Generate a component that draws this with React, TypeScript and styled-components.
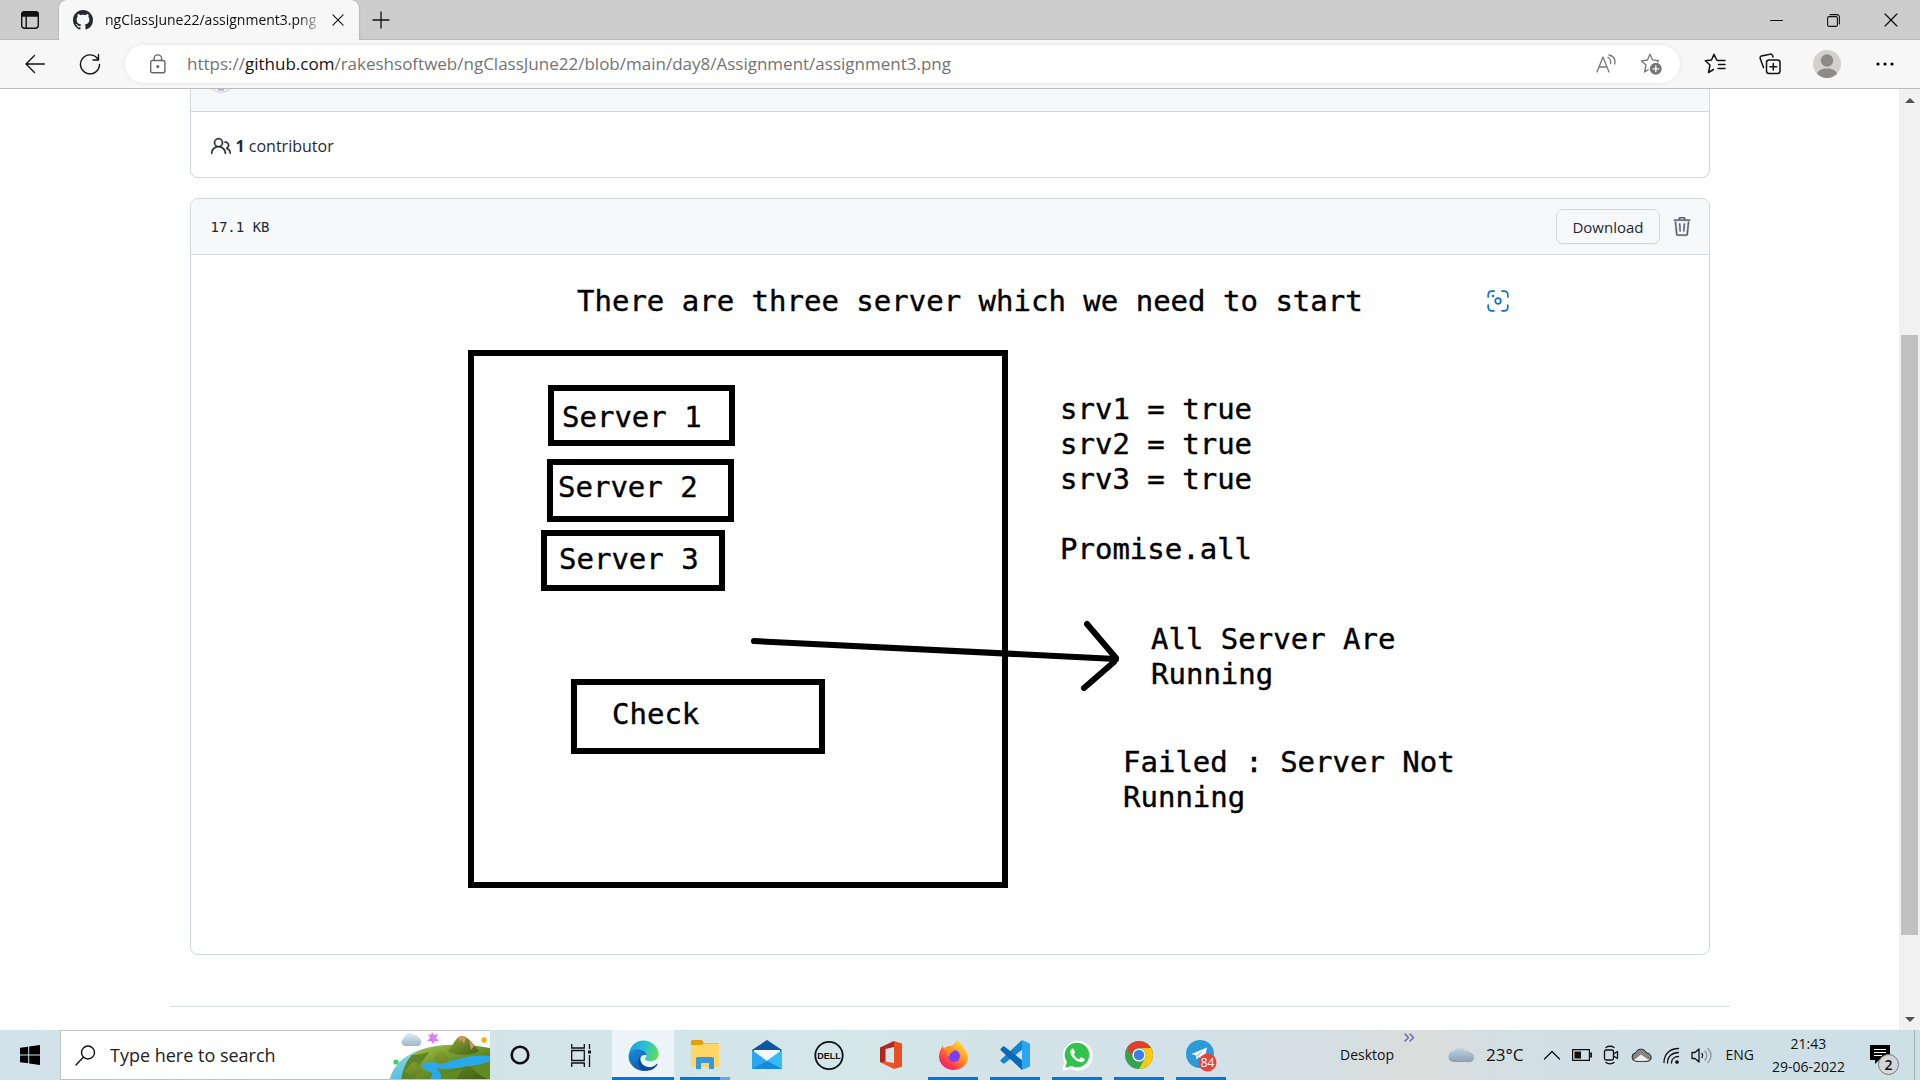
import React from "react";
import styled, { createGlobalStyle, css } from "styled-components";
import { GoPeople, GoTrash } from "react-icons/go";

const ui = `"Open Sans", "Noto Sans", sans-serif`;
const mono = `"DejaVu Sans Mono", "Liberation Mono", monospace`;

const GlobalStyle = createGlobalStyle`
  *, *::before, *::after { box-sizing: border-box; }
  body { margin: 0; background: #fff; font-family: ${ui}; color: #24292f; overflow: hidden; }
  button { border: 0; padding: 0; background: none; color: inherit; font: inherit; }
  svg { display: block; flex: none; }
`;

const Screen = styled.div`
  display: flex;
  flex-direction: column;
  height: 100vh;
`;

/* ---------- browser chrome ---------- */

const TitleBar = styled.header`
  display: flex;
  flex: none;
  height: 40px;
  background: #cdcdcd;
  box-shadow: inset 0 -1px #b9b9b9;
`;

const ChromeButton = styled.button<{ $w: number; $c?: string }>`
  display: flex;
  flex: none;
  align-items: center;
  justify-content: center;
  width: ${(p) => p.$w}px;
  height: 100%;
  color: ${(p) => p.$c ?? "#111"};
`;

const Tab = styled.div`
  display: flex;
  align-items: center;
  width: 300px;
  padding: 0 8px 0 14px;
  border-radius: 8px 8px 0 0;
  background: #f7f7f7;
  box-shadow: 0 0 2px rgba(0, 0, 0, 0.3);
  clip-path: inset(0 -3px 0 -3px);
`;

const TabTitle = styled.span`
  flex: 1;
  margin-left: 12px;
  overflow: hidden;
  white-space: nowrap;
  font-size: 14px;
  line-height: 24px;
  color: #111;
  mask-image: linear-gradient(90deg, #000 88%, transparent 100%);
`;

const WindowControls = styled.div`
  display: flex;
  margin-left: auto;
`;

const Toolbar = styled.nav`
  display: flex;
  flex: none;
  align-items: center;
  height: 49px;
  padding: 0 7px;
  border-bottom: 1px solid #bbb;
  background: #f7f7f7;
`;

const AddressBar = styled.div`
  display: flex;
  flex: 1;
  align-items: center;
  height: 38px;
  margin: 0 8px;
  padding: 0 6px 0 10px;
  border-radius: 19px;
  background: #fff;
  box-shadow: 0 0 4px rgba(0, 0, 0, 0.09);
`;

const Url = styled.a`
  flex: 1;
  margin-left: 6px;
  overflow: hidden;
  white-space: nowrap;
  font-size: 17px;
  line-height: 28px;
  color: #737373;
  text-decoration: none;
`;

const Host = styled.span`
  color: #111;
`;

/* ---------- page ---------- */

const Viewport = styled.div`
  display: flex;
  flex: 1;
  min-height: 0;
  overflow: hidden;
`;

const Page = styled.main`
  flex: 1;
  min-width: 0;
  overflow: hidden;
`;

const Container = styled.div`
  max-width: 1600px;
  margin: 0 auto;
  padding: 0 40px;
`;

const panel = css`
  border: 1px solid #d0d7de;
  background: #fff;
`;

const CommitBox = styled.section`
  ${panel}
  border-top: 0;
  border-radius: 0 0 8px 8px;
`;

const CommitHeader = styled.div`
  display: flex;
  align-items: flex-end;
  height: 23px;
  padding: 0 15px 18px;
  border-bottom: 1px solid #d0d7de;
  background: #f6f8fa;
  overflow: hidden;
`;

const Contributors = styled.div`
  display: flex;
  align-items: center;
  gap: 5px;
  height: 65px;
  padding: 2px 20px 0;
  font-size: 16px;
  line-height: 24px;
`;

const FileBox = styled.section`
  ${panel}
  margin-top: 20px;
  border-radius: 8px;
`;

const FileHeader = styled.div`
  display: flex;
  align-items: center;
  height: 56px;
  padding: 0 17px 0 20px;
  border-bottom: 1px solid #d0d7de;
  border-radius: 8px 8px 0 0;
  background: #f6f8fa;
`;

const FileSize = styled.span`
  margin-right: auto;
  font-family: ${mono};
  font-size: 14px;
  line-height: 20px;
`;

const DownloadButton = styled.button`
  height: 35px;
  margin-right: 12px;
  padding: 0 15px;
  border: 1px solid #d5d8db;
  border-radius: 7px;
  background: #f6f8fa;
  box-shadow: 0 1px 0 rgba(27, 31, 36, 0.04);
  font-size: 15px;
  font-weight: 500;
  line-height: 20px;
`;

const IconButton = styled.button`
  color: #57606a;
  stroke-width: 0.4px;
`;

const ImageArea = styled.div`
  position: relative;
  display: flex;
  justify-content: center;
`;

const Diagram = styled.svg`
  width: 1120px;
  max-width: 100%;
  height: auto;
  font-family: ${mono};
  font-size: 29px;
  fill: #000;
`;

const VisualSearch = styled.button`
  position: absolute;
  top: 35px;
  left: calc(50% + 537px);
  color: #0b70c9;
`;

const FooterRule = styled.hr`
  height: 1px;
  margin: 51px -20px 0;
  border: 0;
  background: #d8dee4;
`;

const Scrollbar = styled.div`
  display: flex;
  flex: none;
  flex-direction: column;
  align-items: center;
  width: 21px;
  background: #f1f1f1;
`;

const ScrollArrow = styled.button`
  display: flex;
  flex: none;
  align-items: center;
  justify-content: center;
  width: 21px;
  height: 22px;
`;

const ScrollTrack = styled.div`
  flex: 1;
  width: 17px;
  padding-top: 224px;
`;

const ScrollThumb = styled.div`
  height: 600px;
  background: #c1c1c1;
`;

/* ---------- taskbar ---------- */

const Taskbar = styled.footer`
  display: flex;
  flex: none;
  height: 50px;
  background: linear-gradient(90deg, #d2e2ea 0, #d3e6e8 45%, #d3e0e8 64%, #d4dfe3 69%, #dadddb 74%, #d2dfe5 79%, #cfdfe6 90%, #cde0e6 100%);
  color: #111;
`;

const TaskSlot = styled.button<{ $w?: number; $active?: boolean }>`
  position: relative;
  display: flex;
  flex: none;
  align-items: center;
  justify-content: center;
  width: ${(p) => p.$w ?? 62}px;
  height: 50px;
  background: ${(p) => (p.$active ? "#edf4f7" : "transparent")};
`;

const RunningLine = styled.span<{ $inset: number; $split?: boolean }>`
  position: absolute;
  right: ${(p) => p.$inset}px;
  bottom: 0;
  left: ${(p) => p.$inset}px;
  height: 3px;
  background: ${(p) => (p.$split ? "linear-gradient(90deg, #0078d7 80%, #62aae4 80%)" : "#0078d7")};
`;

const SearchBox = styled.label`
  display: flex;
  flex: none;
  align-items: center;
  width: 430px;
  height: 50px;
  padding-left: 14px;
  border: 1px solid #bfc3c5;
  border-right: 0;
  background: #fff;
`;

const SearchInput = styled.input`
  flex: 1;
  min-width: 0;
  height: 40px;
  margin-left: 14px;
  padding: 0;
  border: 0;
  outline: 0;
  background: none;
  font-family: ${ui};
  font-size: 18px;
  color: #222;
  &::placeholder { color: #222; opacity: 1; }
`;

const Tray = styled.div`
  display: flex;
  align-items: center;
  margin-left: auto;
`;

const DesktopLabel = styled.span`
  font-size: 14px;
  line-height: 20px;
`;

const Overflow = styled.button`
  align-self: flex-start;
  margin: 3px 32px 0 10px;
`;

const Weather = styled.button`
  display: flex;
  align-items: center;
  gap: 11px;
  margin-right: 20px;
  font-size: 17px;
  line-height: 24px;
`;

const TrayIcons = styled.div`
  display: flex;
  align-items: center;
  gap: 11px;
  margin-right: 13px;
`;

const Language = styled.button`
  font-size: 14px;
  line-height: 20px;
`;

const Clock = styled.time`
  display: flex;
  flex-direction: column;
  gap: 2px;
  margin: 0 23px 0 18px;
  text-align: center;
  font-size: 14px;
  line-height: 21px;
`;

const Notifications = styled.button`
  position: relative;
  display: flex;
  align-items: flex-start;
  width: 46px;
  height: 50px;
  padding: 15px 0 0 2px;
`;

const NoticeCount = styled.span`
  position: absolute;
  top: 24px;
  left: 10px;
  width: 21px;
  height: 21px;
  border: 1px solid #777;
  border-radius: 50%;
  background: #d3d6d8;
  font-size: 14px;
  font-weight: 600;
  line-height: 19px;
  text-align: center;
`;

const ShowDesktop = styled.button`
  width: 6px;
  height: 50px;
  border-left: 1px solid #9fb0b8;
`;

/* ---------- line icons ---------- */

type LineProps = { w: number; h?: number; box: string; sw?: number; children: React.ReactNode };
const Line = ({ w, h, box, sw = 1.4, children }: LineProps) => (
  <svg width={w} height={h ?? w} viewBox={box} fill="none" stroke="currentColor" strokeWidth={sw} strokeLinecap="round" strokeLinejoin="round" aria-hidden="true">
    {children}
  </svg>
);

const GitHubIcon = () => (
  <svg width="20" height="20" viewBox="0 0 16 16" fill="#24292f" aria-hidden="true">
    <path fillRule="evenodd" d="M8 0C3.58 0 0 3.58 0 8c0 3.54 2.29 6.53 5.47 7.59.4.07.55-.17.55-.38 0-.19-.01-.82-.01-1.49-2.01.37-2.53-.49-2.69-.94-.09-.23-.48-.94-.82-1.13-.28-.15-.68-.52-.01-.53.63-.01 1.08.58 1.23.82.72 1.21 1.87.87 2.33.66.07-.52.28-.87.51-1.07-1.78-.2-3.64-.89-3.64-3.95 0-.87.31-1.59.82-2.15-.08-.2-.36-1.02.08-2.12 0 0 .67-.21 2.2.82.64-.18 1.32-.27 2-.27.68 0 1.36.09 2 .27 1.53-1.04 2.2-.82 2.2-.82.44 1.1.16 1.92.08 2.12.51.56.82 1.27.82 2.15 0 3.07-1.87 3.75-3.65 3.95.29.25.54.73.54 1.48 0 1.07-.01 1.93-.01 2.2 0 .21.15.46.55.38A8.013 8.013 0 0016 8c0-4.42-3.58-8-8-8z" />
  </svg>
);

const TabActionsIcon = () => (
  <Line w={20} box="0 0 20 20" sw={1.4}>
    <rect x="1.7" y="1.7" width="16.6" height="16.6" rx="3" />
    <path d="M1.7 6V4.5a2.8 2.8 0 0 1 2.8-2.8h11a2.8 2.8 0 0 1 2.8 2.8V6z" fill="currentColor" />
    <path d="M6.2 6v12" />
  </Line>
);

const CloseIcon = ({ s = 13 }: { s?: number }) => (
  <Line w={s} box="0 0 13 13" sw={1.2}><path d="M1 1l11 11M12 1L1 12" /></Line>
);

const LockIcon = () => (
  <Line w={18} h={20} box="0 0 18 20" sw={1.4}>
    <rect x="1.7" y="6.5" width="14.2" height="12.3" rx="1.8" />
    <path d="M5 6.5V4.7a3.8 3.8 0 0 1 7.6 0v1.8" />
    <circle cx="8.8" cy="12.6" r="0.9" fill="currentColor" />
  </Line>
);

const star = "M10 1.3l2.5 5.6 6.1.7";

const Cloud = ({ w = 28 }: { w?: number }) => (
  <svg width={w} height={w / 2} viewBox="0 0 28 14" aria-hidden="true">
    <defs>
      <linearGradient id="cloudFill" x1="0" y1="0" x2="0" y2="1">
        <stop offset="0" stopColor="#bfd3e2" /><stop offset="1" stopColor="#8aa0b1" />
      </linearGradient>
    </defs>
    <path d="M6 14a5.6 5.6 0 0 1 .8-11.1A7 7 0 0 1 13 0c2.6 0 4.5 1.2 5.6 2.9a5 5 0 0 1 4.6 1.5A4.9 4.9 0 0 1 23 14z" fill="url(#cloudFill)" />
  </svg>
);

/* ---------- taskbar pictures ---------- */

const SearchScene = () => (
  <svg width="100" height="48" viewBox="0 0 100 48" aria-hidden="true">
    <defs>
      <linearGradient id="land" x1="0" y1="0" x2="1" y2="1"><stop offset="0" stopColor="#b5c748" /><stop offset="0.5" stopColor="#6c962a" /><stop offset="1" stopColor="#3b5c14" /></linearGradient>
      <linearGradient id="hill" x1="0" y1="0" x2="1" y2="1"><stop offset="0" stopColor="#95ad37" /><stop offset="1" stopColor="#3f5f14" /></linearGradient>
      <linearGradient id="sea" x1="0" y1="0" x2="1" y2="1"><stop offset="0" stopColor="#9fe0dc" /><stop offset="1" stopColor="#1fa3ea" /></linearGradient>
      <linearGradient id="puff" x1="0" y1="0" x2="0" y2="1"><stop offset="0" stopColor="#dfe9f1" /><stop offset="1" stopColor="#9fb8ca" /></linearGradient>
    </defs>
    <path d="M0 48C4 30 24 15 58 14c18-1 32 2 42 6v28z" fill="url(#sea)" />
    <path d="M22 24C36 13 72 11 100 17v31H12c2-8 6-17 10-24z" fill="url(#land)" />
    <path d="M22 24c6 0 10-1 17-3-4 6-9 12-11 17-1 4-2 7-3 10H11c2-9 5-18 11-24z" fill="#5c8624" />
    <path d="M100 25c-16-2-26 2-40 5-12 2-26 0-28 4s10 6 10 9c0 2-1 4-2 5h12c0-5-4-8-5-11 16 3 30-3 53-4z" fill="#2aa9ea" />
    <path d="M50 48c2-8 24-8 50-18v18z" fill="#5f8a24" />
    <path d="M57 20c6-4 8-14 14-15 8-1 14 12 18 15-8 5-24 5-32 0z" fill="url(#hill)" />
    <path d="M68 7l3-2 5 2-2 6-3-5-1 3zM79 9l5 6-3 4z" fill="#dd8f66" />
    <path d="M42 29c3-2 4-10 9-9s7 7 9 9c-4 5-14 5-18 0zM15 40c3-2 5-9 9-9s7 6 9 9c-4 5-14 5-18 0zM66 48c4-4 6-13 11-13s9 8 20 13z" fill="url(#hill)" />
    <path d="M14 15a4.500 4.500 0 0 1 0-8 6 6 0 0 1 10-3 5 5 0 0 1 5 3 4.500 4.500 0 0 1 0 8z" fill="url(#puff)" />
    <path d="M42 1l2 3 4-1-2 4 3 3-4 0-2 3-2-3-4 0 3-3-2-4 3 1z" fill="#df7df5" />
    <circle cx="94" cy="9" r="2.7" fill="#ffb000" /><circle cx="6" cy="31" r="2.6" fill="#3fd06a" />
  </svg>
);

const EdgeIcon = () => (
  <svg width="31" height="31" viewBox="0 0 32 32" aria-hidden="true">
    <defs>
      <linearGradient id="edgeTop" x1="0" y1="0.3" x2="1" y2="0.5"><stop offset="0" stopColor="#1b9de2" /><stop offset="0.55" stopColor="#2bc3d2" /><stop offset="1" stopColor="#62dc52" /></linearGradient>
      <linearGradient id="edgeMid" x1="0" y1="0" x2="0.6" y2="1"><stop offset="0" stopColor="#1b8fdc" /><stop offset="1" stopColor="#0d59b4" /></linearGradient>
    </defs>
    <path d="M1 15C2 6 8 .5 16 .5S31.5 7 31.5 14c0 5-3.5 8-8 8-4 0-6-1.5-6-2.6 0-.9 1.7-1.4 1.7-4 0-3-3-5.4-7-5.4C7 10 2.5 12 1 15z" fill="url(#edgeTop)" />
    <path d="M.6 16C1 11.5 6 9 11.5 9.600c4.500.4 7.700 3 7.700 6.200-3.700-1.500-7 1-7 5 0 6 5 10.700 10 9.700-2 1-4 1.400-6.200 1.400C7 31.900 0 24 .6 16z" fill="url(#edgeMid)" />
    <path d="M13 16.600c-1.500 6.500 3 11.400 9 11.400 3 0 6-1.200 7.500-3.300.6-.7 1.200.2.800.9-2 3.500-6 6-10.500 6.200C11 32 8 22 13 16.600z" fill="#0b4a9c" />
  </svg>
);

const FolderIcon = () => (
  <svg width="28" height="30" viewBox="0 0 28 30" aria-hidden="true">
    <path d="M0 1.500A1.500 1.500 0 0 1 1.500 0H11l2 3h13.500A1.500 1.500 0 0 1 28 4.500V23H0z" fill="#e0a010" />
    <path d="M0 5h11l2-1.500h15V27H0z" fill="#ffd767" />
    <path d="M5 29V18.500A1.500 1.500 0 0 1 6.500 17h15a1.500 1.500 0 0 1 1.500 1.500V29h-5v-6h-8v6z" fill="#3a96dd" />
  </svg>
);

const MailIcon = () => (
  <svg width="30" height="32" viewBox="0 0 30 32" aria-hidden="true">
    <path d="M0 11L15 1l15 10v4H0z" fill="#0a57a6" />
    <path d="M2 11h26v7L15 23 2 17z" fill="#f5f8fb" />
    <path d="M0 11l15 11L30 11v19H0z" fill="#2aa7ee" /><path d="M15 22L30 11v19z" fill="#36bbf7" /><path d="M0 30l15-8 15 8z" fill="#148adb" />
  </svg>
);

const DellIcon = () => (
  <svg width="30" height="31" viewBox="0 0 30 31" aria-hidden="true">
    <circle cx="15" cy="15.5" r="13.7" fill="none" stroke="#111" strokeWidth="1.8" />
    <text x="15" y="19" textAnchor="middle" fontFamily="Liberation Sans, Arial, sans-serif" fontWeight="700" fontSize="9" fill="#111">DELL</text>
  </svg>
);

const OfficeIcon = () => (
  <svg width="23" height="28" viewBox="0 0 23 28" aria-hidden="true">
    <path d="M14 0l8 2.500v23L14 28z" fill="#e8501f" />
    <path d="M0 6.500L14 0v6L5.500 8v12.500L1.500 22 0 21z" fill="#b3261e" />
    <path d="M1.500 22l4-1.500L14 22v6z" fill="#f0522a" />
  </svg>
);

const FirefoxIcon = () => (
  <svg width="29" height="30" viewBox="0 0 29 30" aria-hidden="true">
    <defs>
      <linearGradient id="fox" x1="0.9" y1="0" x2="0.1" y2="1"><stop offset="0" stopColor="#fff14a" /><stop offset="0.4" stopColor="#ff9a1f" /><stop offset="0.75" stopColor="#ff3a4c" /><stop offset="1" stopColor="#e31587" /></linearGradient>
    </defs>
    <path d="M18 0c3 3 6 5 6.500 8 1.500 1 4.300 4 4.300 9.500C28.800 25 22 30 14.500 30S0 24.500 0 16.500C0 12 2 8 4 5.500c0 1.500.4 2.500 1 3.200C7 6.500 9.500 5.800 12 6c2-.2 4.500-3 6-6z" fill="url(#fox)" />
    <circle cx="15" cy="16" r="6" fill="#7a3ff0" />
    <path d="M5 9c3-1.500 6-1 7.500.8 1.500-.2 3 .3 3.500 1-2 .3-3 1.500-4 2-1.500.8-2 2-1 4-3-1-4-4-3-6z" fill="#ff9420" />
  </svg>
);

const CodeIcon = () => (
  <svg width="30" height="30" viewBox="0 0 30 30" aria-hidden="true">
    <path d="M22 0L1 19.500c-.8.700-.8 1.500 0 2.200l1.800 1.600c.6.500 1.200.5 1.900 0L23 9z" fill="#1583cd" />
    <path d="M22 30L1 10.500c-.8-.7-.8-1.500 0-2.200l1.800-1.600c.6-.5 1.200-.5 1.900 0L23 21z" fill="#0b6ab5" />
    <path d="M22 0l8 3.500v23L22 30z" fill="#2ba6f0" />
  </svg>
);

const WhatsAppIcon = () => (
  <svg width="31" height="31" viewBox="0 0 31 31" aria-hidden="true">
    <path d="M.5 30.500l2-8A15 15 0 1 1 9 29z" fill="#fff" />
    <path d="M3.300 27.700l1.600-5.700A12.300 12.300 0 1 1 9.600 26z" fill="#33c24d" />
    <path d="M11 8.500c-.8-.3-2.800 1-2.700 3.500.2 4.500 6.500 10.300 11 10.300 2 0 3.700-1.700 3.500-3 0-.6-3.400-2.200-3.900-2-.6.200-1.300 2-2 1.900-2-.6-4.500-3-5-4.700 0-.6 1.300-1.300 1.200-2 0-.5-1.500-3.900-2.100-4z" fill="#fff" />
  </svg>
);

const ChromeIcon = () => (
  <svg width="28" height="28" viewBox="0 0 28 28" aria-hidden="true">
    <circle cx="14" cy="14" r="14" fill="#34a350" />
    <path d="M1.900 7A14 14 0 0 1 26.100 7H14a7 7 0 0 0-6 10.500z" fill="#e63b2e" />
    <path d="M26.100 7A14 14 0 0 1 14 28l6-10.500A7 7 0 0 0 14 7z" fill="#fdc913" />
    <circle cx="14" cy="14" r="6.600" fill="#fff" /><circle cx="14" cy="14" r="5.200" fill="#3b7eea" />
  </svg>
);

const TelegramIcon = () => (
  <svg width="31" height="33" viewBox="0 0 31 33" aria-hidden="true">
    <circle cx="14" cy="15" r="14" fill="#2a9bd6" />
    <path d="M5.500 15L21 8.500l-3 13-5-3.500-2.500 2.500-.5-4z" fill="#fff" /><path d="M10 16.500L18 11l-6 7z" fill="#a8cfe6" />
    <circle cx="21.5" cy="23.5" r="9" fill="#ee3f3d" />
    <text x="21.5" y="28" textAnchor="middle" fontFamily="Open Sans, sans-serif" fontSize="12" fill="#fff">84</text>
  </svg>
);

const taskApps = [
  { name: "Microsoft Edge", icon: <EdgeIcon />, running: true, active: true },
  { name: "File Explorer", icon: <FolderIcon />, running: true, split: true },
  { name: "Mail", icon: <MailIcon /> },
  { name: "Dell", icon: <DellIcon /> },
  { name: "Office", icon: <OfficeIcon /> },
  { name: "Firefox", icon: <FirefoxIcon />, running: true },
  { name: "Visual Studio Code", icon: <CodeIcon />, running: true },
  { name: "WhatsApp", icon: <WhatsAppIcon />, running: true },
  { name: "Chrome", icon: <ChromeIcon />, running: true },
  { name: "Telegram", icon: <TelegramIcon />, running: true },
];

const serverBoxes = [
  { x: 161, y: 133, w: 181, h: 55, label: "Server 1", tx: 172, ty: 172 },
  { x: 160, y: 207, w: 181, h: 57, label: "Server 2", tx: 168, ty: 242 },
  { x: 154, y: 278, w: 178, h: 55, label: "Server 3", tx: 169, ty: 314 },
  { x: 184, y: 427, w: 248, h: 69, label: "Check", tx: 222, ty: 469 },
];

const notes = [
  { x: 187, y: 56, text: "There are three server which we need to start" },
  { x: 670, y: 164, text: "srv1 = true" },
  { x: 670, y: 199, text: "srv2 = true" },
  { x: 670, y: 234, text: "srv3 = true" },
  { x: 670, y: 304, text: "Promise.all" },
  { x: 761, y: 394, text: "All Server Are" },
  { x: 761, y: 429, text: "Running" },
  { x: 733, y: 517, text: "Failed : Server Not" },
  { x: 733, y: 552, text: "Running" },
];

const AssignmentDiagram = () => (
  <Diagram viewBox="0 0 1120 699" role="img" aria-label="Assignment diagram">
    <g fill="none" stroke="#000" strokeWidth="6">
      <rect x="81" y="98" width="534" height="532" />
      {serverBoxes.map((b) => <rect key={b.label} x={b.x} y={b.y} width={b.w} height={b.h} />)}
      <path d="M364 386L726 404M697 369l29 34M694 433l30-26" strokeLinecap="round" strokeLinejoin="round" />
    </g>
    <g stroke="#000" strokeWidth="0.4">
      {serverBoxes.map((b) => <text key={b.label} x={b.tx} y={b.ty}>{b.label}</text>)}
      {notes.map((n) => <text key={n.y} x={n.x} y={n.y}>{n.text}</text>)}
    </g>
  </Diagram>
);

export default function App() {
  return (
    <Screen>
      <GlobalStyle />
      <TitleBar>
        <ChromeButton $w={59} aria-label="Tab actions"><TabActionsIcon /></ChromeButton>
        <Tab>
          <GitHubIcon />
          <TabTitle>ngClassJune22/assignment3.png</TabTitle>
          <ChromeButton $w={26} aria-label="Close tab"><CloseIcon s={12} /></ChromeButton>
        </Tab>
        <ChromeButton $w={43} aria-label="New tab">
          <Line w={18} box="0 0 18 18" sw={1.3}><path d="M9 1v16M1 9h16" /></Line>
        </ChromeButton>
        <WindowControls>
          <ChromeButton $w={57} aria-label="Minimize"><Line w={13} box="0 0 13 13" sw={1}><path d="M.5 6.500h12" /></Line></ChromeButton>
          <ChromeButton $w={57} aria-label="Restore">
            <Line w={13} box="0 0 13 13" sw={1.1}><rect x=".6" y="2.6" width="9.8" height="9.8" rx="1.5" /><path d="M3 .6h7a2.400 2.400 0 0 1 2.400 2.400v7" /></Line>
          </ChromeButton>
          <ChromeButton $w={58} aria-label="Close"><CloseIcon s={14} /></ChromeButton>
        </WindowControls>
      </TitleBar>

      <Toolbar>
        <ChromeButton $w={55} aria-label="Back"><Line w={20} box="0 0 20 20"><path d="M19.300 10H1M9.500 1.500L1 10l8.500 8.500" /></Line></ChromeButton>
        <ChromeButton $w={55} aria-label="Refresh"><Line w={22} box="0 0 22 22"><path d="M20.500 11.500A9.500 9.500 0 1 1 18.500 5.500M19.500 1.500v5.500h-5.500" /></Line></ChromeButton>
        <AddressBar>
          <ChromeButton $w={46} $c="#666" aria-label="Site information"><LockIcon /></ChromeButton>
          <Url href="#">https://<Host>github.com</Host>/rakeshsoftweb/ngClassJune22/blob/main/day8/Assignment/assignment3.png</Url>
          <ChromeButton $w={44} $c="#767676" aria-label="Read aloud">
            <Line w={20} box="0 0 20 20" sw={1.3}><path d="M1 18L7 3l6 15M3 13h8M12 3.500c2.500 1 3 4 2.500 6M13 1c5 1 6.500 5 5.800 9" /></Line>
          </ChromeButton>
          <ChromeButton $w={46} $c="#767676" aria-label="Add to favorites">
            <Line w={22} box="0 0 22 22" sw={1.3}>
              <path d={`${star}M10 1.300L7.500 7l-6.200.8L6 12 4.500 19l3.700-2.300M18.600 7.600l-1.300 1.300`} />
              <circle cx="15.8" cy="15.8" r="5.3" fill="currentColor" /><path d="M15.800 13v5.600M13 15.800h5.600" stroke="#fff" />
            </Line>
          </ChromeButton>
        </AddressBar>
        <ChromeButton $w={54} aria-label="Favorites">
          <Line w={22} box="0 0 22 22" sw={1.5}><path d="M12.800 7.300L10 1.300 7.500 7l-6.200.8L6 12 4.500 19.500l5-3M13.500 7.500h7.500M14.500 11.500h6.500M14 15.500h7" /></Line>
        </ChromeButton>
        <ChromeButton $w={56} aria-label="Collections">
          <Line w={22} box="0 0 22 22" sw={1.5}><rect x="7.5" y="7" width="13.5" height="13.5" rx="2.5" /><path d="M14.300 10.500v6.600M11 13.800h6.600M4.500 14.500L1.200 5.500a2 2 0 0 1 1.300-2.600L11 1.200a2 2 0 0 1 2.500 1.400l.5 1.400" /></Line>
        </ChromeButton>
        <ChromeButton $w={58} aria-label="Profile">
          <svg width="28" height="28" viewBox="0 0 28 28" aria-hidden="true">
            <circle cx="14" cy="14" r="14" fill="#d3d1ce" /><circle cx="14" cy="10.5" r="6.2" fill="#8e8a87" />
            <path d="M4 23.800c2-7 18-7 20 0a14 14 0 0 1-20 0z" fill="#8e8a87" />
          </svg>
        </ChromeButton>
        <ChromeButton $w={57} aria-label="Settings and more">
          <svg width="18" height="4" viewBox="0 0 18 4" aria-hidden="true"><circle cx="2" cy="2" r="1.6" /><circle cx="9" cy="2" r="1.6" /><circle cx="16" cy="2" r="1.6" /></svg>
        </ChromeButton>
      </Toolbar>

      <Viewport>
        <Page>
          <Container>
            <CommitBox>
              <CommitHeader>
                <svg width="30" height="30" viewBox="0 0 30 30" aria-hidden="true"><circle cx="15" cy="15" r="14.5" fill="#f0f0f2" stroke="#cfd1d8" /><path d="M12 26h6v1.500h-6z" fill="#c9a0e0" /></svg>
              </CommitHeader>
              <Contributors><GoPeople size={20} strokeWidth={0.5} /><span><strong>1</strong> contributor</span></Contributors>
            </CommitBox>
            <FileBox>
              <FileHeader>
                <FileSize>17.1 KB</FileSize>
                <DownloadButton>Download</DownloadButton>
                <IconButton aria-label="Delete this file"><GoTrash size={20} strokeWidth={0.5} /></IconButton>
              </FileHeader>
              <ImageArea>
                <AssignmentDiagram />
                <VisualSearch aria-label="Visual search">
                  <Line w={22} box="0 0 22 22" sw={1.7}>
                    <path d="M1.200 7V4.500A3.300 3.300 0 0 1 4.500 1.200H7M15 1.200h2.500a3.300 3.300 0 0 1 3.300 3.300V7M20.800 15v2.500a3.300 3.300 0 0 1-3.300 3.300H15M7 20.800H4.500a3.300 3.300 0 0 1-3.300-3.300V15" />
                    <circle cx="11" cy="11" r="2.8" /><circle cx="6" cy="6" r=".5" />
                  </Line>
                </VisualSearch>
              </ImageArea>
            </FileBox>
            <FooterRule />
          </Container>
        </Page>
        <Scrollbar>
          <ScrollArrow aria-label="Scroll up"><svg width="10" height="5" viewBox="0 0 10 5"><path d="M0 5l5-5 5 5z" fill="#505050" /></svg></ScrollArrow>
          <ScrollTrack><ScrollThumb /></ScrollTrack>
          <ScrollArrow aria-label="Scroll down"><svg width="10" height="5" viewBox="0 0 10 5"><path d="M0 0l5 5 5-5z" fill="#505050" /></svg></ScrollArrow>
        </Scrollbar>
      </Viewport>

      <Taskbar>
        <TaskSlot $w={60} aria-label="Start">
          <svg width="20" height="20" viewBox="0 0 20 20" aria-hidden="true"><path d="M0 2.800l8.200-1.100v7.800H0zM9.200 1.500L20 0v9.500H9.200zM0 10.500h8.200v7.800L0 17.200zM9.200 10.500H20V20L9.200 18.500z" fill="#000" /></svg>
        </TaskSlot>
        <SearchBox>
          <Line w={21} box="0 0 21 21" sw={1.4}><circle cx="13" cy="7.5" r="6.5" /><path d="M8.300 12.200L1 20" /></Line>
          <SearchInput type="text" placeholder="Type here to search" aria-label="Type here to search" />
          <SearchScene />
        </SearchBox>
        <TaskSlot $w={60} aria-label="Cortana">
          <svg width="20" height="20" viewBox="0 0 20 20" aria-hidden="true"><circle cx="10" cy="10" r="8.3" fill="none" stroke="#111" strokeWidth="2.6" /></svg>
        </TaskSlot>
        <TaskSlot aria-label="Task view">
          <svg width="21" height="23" viewBox="0 -1 21 23" fill="none" stroke="#111" strokeWidth="1.3" aria-hidden="true"><path d="M.7-1v4h12.600v-4M.7 22v-4h12.600v4M.7 5.500h12.600v10H.7zM18.500-1v5M18.500 10v12" /><path d="M17 5.500h3v3h-3z" fill="#111" stroke="none" /></svg>
        </TaskSlot>
        {taskApps.map((a) => (
          <TaskSlot key={a.name} $active={a.active} aria-label={a.name}>
            {a.icon}
            {a.running && <RunningLine $inset={a.active ? 0 : 6} $split={a.split} />}
          </TaskSlot>
        ))}
        <Tray>
          <DesktopLabel>Desktop</DesktopLabel>
          <Overflow aria-label="More toolbar items"><Line w={11} h={9} box="0 0 11 9" sw={1.3}><path d="M1 1l3.500 3.500L1 8M6 1l3.500 3.500L6 8" stroke="#5c5ca8" /></Line></Overflow>
          <Weather><Cloud />23°C</Weather>
          <TrayIcons>
            <Line w={18} h={10} box="0 0 18 10" sw={1.3}><path d="M1.500 9L9 1.500 16.500 9" /></Line>
            <svg width="20" height="12" viewBox="0 0 20 12" aria-hidden="true"><path d="M.6.6h16.800v10.800H.6zM18 4h1.500v4H18z" fill="none" stroke="#111" strokeWidth="1.2" /><path d="M2.500 2.500H9v7H2.500z" fill="#111" /></svg>
            <Line w={17} h={20} box="0 0 17 20" sw={1.3}><rect x="1.5" y="5" width="9" height="10" rx="1.5" /><path d="M10.500 9l4-2.500v7l-4-2.500M3 2.500c2-1.700 6-1.700 8 0M3 17.500c2 1.700 6 1.700 8 0" /></Line>
            <svg width="21" height="14" viewBox="0 0 21 14" aria-hidden="true"><path d="M5 13.300a4.300 4.300 0 0 1-.5-8.500C6 .5 13 -.5 15.500 4.800c6 .5 6 8.500 1 8.500z" fill="#858585" stroke="#222" /><path d="M3 12l7-5.500 8 5.500c-1 1.300-14 1.300-15 0z" fill="#eee" /></svg>
            <Line w={17} h={17} box="0 0 17 17" sw={1.3}><path d="M1 15.500C1 7 7 1.500 15.500 1.500M4.500 16C4.500 9.500 9 5.500 15.500 5.500M8.500 16c0-4 3-6.500 7-6.500" /><circle cx="14" cy="15" r="1.2" fill="currentColor" /></Line>
            <Line w={21} h={17} box="0 0 21 17" sw={1.3}><path d="M1 5.500h3L8 2v13l-4-3.500H1zM11 6.500c1 1.300 1 2.700 0 4" /><path d="M14 4c2.300 3 2.300 6 0 9M17 1.500c4 4.500 4 9.500 0 14" stroke="#8b979d" /></Line>
          </TrayIcons>
          <Language>ENG</Language>
          <Clock><span>21:43</span><span>29-06-2022</span></Clock>
          <Notifications aria-label="Notifications">
            <svg width="20" height="20" viewBox="0 0 20 20" aria-hidden="true"><path d="M0 0h20v15H9l-4 4v-4H0z" fill="#000" /><path d="M4 4.500h12M4 7.500h12M4 10.500h8" stroke="#fff" strokeWidth="1.2" /></svg>
            <NoticeCount>2</NoticeCount>
          </Notifications>
          <ShowDesktop aria-label="Show desktop" />
        </Tray>
      </Taskbar>
    </Screen>
  );
}
